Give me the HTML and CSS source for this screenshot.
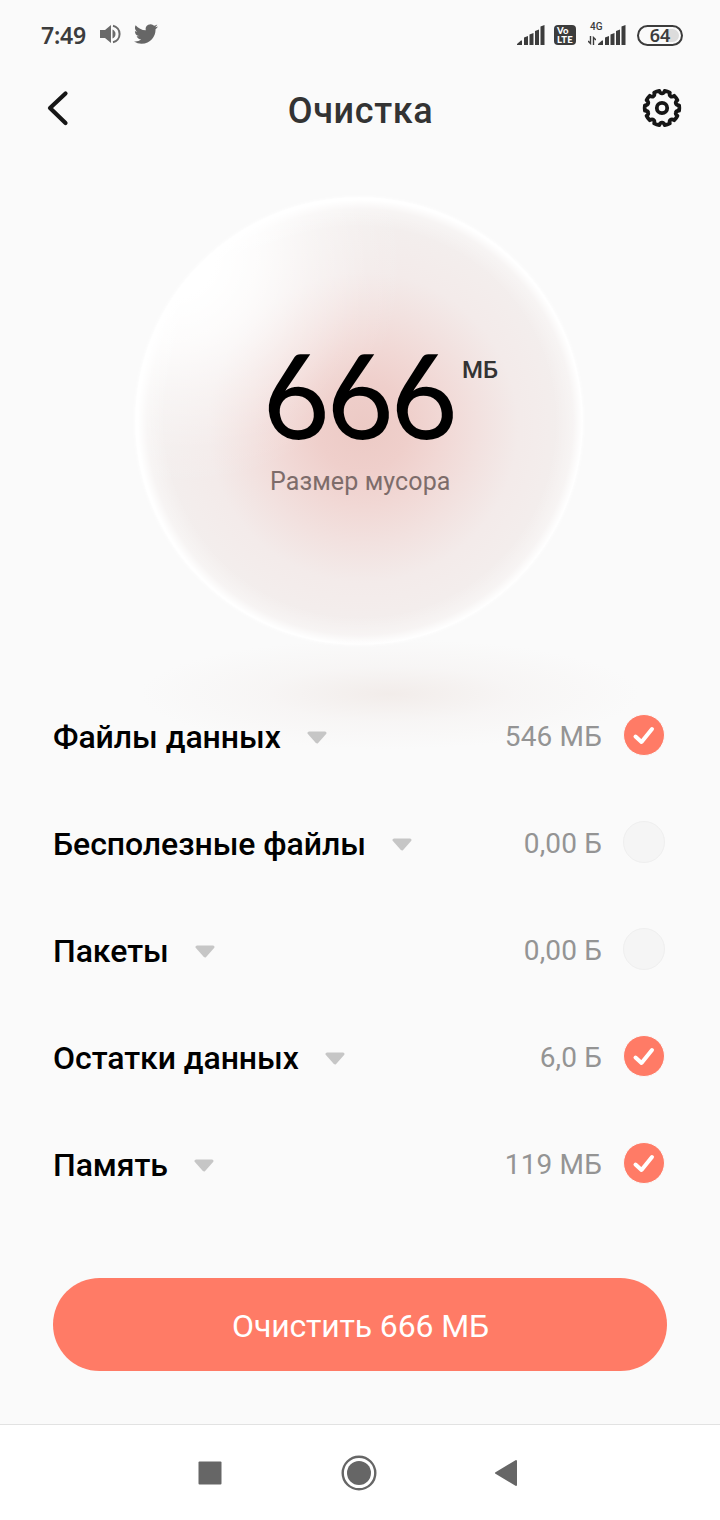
FILE: index.html
```html
<!DOCTYPE html>
<html lang="ru">
<head>
    <meta charset="utf-8">
    <title>Очистка</title>
    <meta name="viewport" content="width=device-width, initial-scale=1">
    <link rel="stylesheet" href="styles.css">
</head>
<body>
    <div class="phone">
        <div class="status">
            <div class="status-left">
                <span class="time">7:49</span>
                <svg class="sound" width="21" height="20" viewBox="0 0 21 20">
                    <path d="M0 6h5l6-5v18l-6-5H0z" fill="#6a6a6a"/>
                    <path d="M12.5 5.5q3 1.5 3 4.5t-3 4.5z" fill="#6a6a6a"/>
                    <path d="M13 1.8a8.4 8.4 0 0 1 0 16.4" fill="none" stroke="#6a6a6a" stroke-width="2"/>
                </svg>
                <svg class="bird" width="24" height="24" viewBox="0 0 24 24">
                    <path fill="#666" d="M23.95 4.57a10 10 0 0 1-2.82.77 4.96 4.96 0 0 0 2.16-2.72c-.95.56-2 .96-3.13 1.18a4.92 4.92 0 0 0-8.38 4.48C7.69 8.1 4.07 6.13 1.64 3.16a4.82 4.82 0 0 0-.67 2.48c0 1.7.87 3.2 2.19 4.09a4.9 4.9 0 0 1-2.23-.62v.06a4.92 4.92 0 0 0 3.95 4.83 5 5 0 0 1-2.21.08 4.94 4.94 0 0 0 4.6 3.42A9.87 9.87 0 0 1 0 19.54a13.99 13.99 0 0 0 7.55 2.21c9.05 0 14-7.5 14-13.98 0-.21 0-.42-.02-.63a9.94 9.94 0 0 0 2.46-2.55z"/>
                </svg>
            </div>
            <div class="status-right">
                <svg class="signal" width="28" height="20" viewBox="0 0 28 20">
                    <path fill="#3c3c3c" d="M0 20v-1l4-3.500h1V20zM7 12.500l4-1.500v9H7zM12.500 9.500l4-1.500v12h-4zM18 6l4-1.500V20h-4zM23.500 1.500l4-1.500v20h-4z"/>
                </svg>
                <span class="volte"><b>Vo</b><b>LTE</b></span>
                <span class="mobile">
                    <span class="net">4G</span>
                    <svg class="arrows" width="8" height="9" viewBox="0 0 8 9">
                        <path fill="none" stroke="#3c3c3c" stroke-width="1.400" d="M2.500 0v7.500L0 5M5.500 9V1.500L8 4"/>
                    </svg>
                    <svg width="28" height="20" viewBox="0 0 28 20">
                        <path fill="#3c3c3c" d="M0 20v-1l4-3.500h1V20zM7 12.500l4-1.500v9H7zM12.500 9.500l4-1.500v12h-4zM18 6l4-1.500V20h-4zM23.500 1.500l4-1.500v20h-4z"/>
                    </svg>
                </span>
                <span class="battery">64</span>
            </div>
        </div>

        <div class="header">
            <svg width="24" height="36" viewBox="0 0 24 36">
                <path d="M19.500 3.500L4 18l15.500 15" fill="none" stroke="#161616" stroke-width="4.200" stroke-linecap="round" stroke-linejoin="round"/>
            </svg>
            <h1>Очистка</h1>
            <svg id="gear" width="40" height="40" viewBox="-20 -20 40 40">
                <path id="gear-rim" fill="none" stroke="#161616" stroke-width="3.800" stroke-linejoin="round"/>
                <circle r="5.200" fill="none" stroke="#161616" stroke-width="3.800"/>
            </svg>
        </div>

        <div class="hero">
            <div class="ball">
                <div class="total"><span class="number"><i>6</i><i>6</i><i>6</i></span><span class="unit">МБ</span></div>
                <div class="caption">Размер мусора</div>
            </div>
            <div class="shadow"></div>
        </div>

        <ul class="list">
            <li>
                <span class="name">Файлы данных</span><svg class="arrow" width="20" height="14" viewBox="0 0 20 14"><path d="M2 2h16l-8 9z"/></svg>
                <span class="size">546 МБ</span>
                <span class="check on"><svg width="40" height="40" viewBox="0 0 40 40"><path d="M11.500 21.500l6 5.500L28 14"/></svg></span>
            </li>
            <li>
                <span class="name">Бесполезные файлы</span><svg class="arrow" width="20" height="14" viewBox="0 0 20 14"><path d="M2 2h16l-8 9z"/></svg>
                <span class="size">0,00 Б</span>
                <span class="check"></span>
            </li>
            <li>
                <span class="name">Пакеты</span><svg class="arrow" width="20" height="14" viewBox="0 0 20 14"><path d="M2 2h16l-8 9z"/></svg>
                <span class="size">0,00 Б</span>
                <span class="check"></span>
            </li>
            <li>
                <span class="name">Остатки данных</span><svg class="arrow" width="20" height="14" viewBox="0 0 20 14"><path d="M2 2h16l-8 9z"/></svg>
                <span class="size">6,0 Б</span>
                <span class="check on"><svg width="40" height="40" viewBox="0 0 40 40"><path d="M11.500 21.500l6 5.500L28 14"/></svg></span>
            </li>
            <li>
                <span class="name">Память</span><svg class="arrow" width="20" height="14" viewBox="0 0 20 14"><path d="M2 2h16l-8 9z"/></svg>
                <span class="size">119 МБ</span>
                <span class="check on"><svg width="40" height="40" viewBox="0 0 40 40"><path d="M11.500 21.500l6 5.500L28 14"/></svg></span>
            </li>
        </ul>

        <button class="clean">Очистить 666 МБ</button>

        <div class="navbar">
            <svg width="24" height="24" viewBox="0 0 24 24"><rect x=".5" y=".5" width="23" height="23" rx="1" fill="#666"/></svg>
            <svg class="home" width="36" height="36" viewBox="0 0 36 36">
                <circle cx="18" cy="18" r="16.300" fill="none" stroke="#666" stroke-width="2.400"/>
                <circle cx="18" cy="18" r="12" fill="#666"/>
            </svg>
            <svg width="24" height="28" viewBox="0 0 24 28"><path d="M2 14L22 2v24z" fill="#666" stroke="#666" stroke-width="2" stroke-linejoin="round"/></svg>
        </div>
    </div>
    <script>
        // обод шестерёнки: 10 зубцов с впадинами
        var d = "";
        function point(r, deg) {
            var a = deg * Math.PI / 180;
            return (r * Math.sin(a)).toFixed(2) + " " + (-r * Math.cos(a)).toFixed(2);
        }
        for (var i = 0; i < 10; i++) {
            var a = i * 36;
            d += (i ? "L" : "M") + point(17.3, a - 27);
            d += "A17.3 17.3 0 0 1 " + point(17.3, a - 9);
            d += "Q" + point(14.6, a - 7) + " " + point(14.6, a);
            d += "Q" + point(14.6, a + 7) + " " + point(17.3, a + 9);
        }
        document.getElementById("gear-rim").setAttribute("d", d + "z");
    </script>
</body>
</html>
```

FILE: styles.css
```css
*{
    margin: 0;
    padding: 0;
    box-sizing: border-box;
}
body{
    background: #fafafa;
    font-family: Roboto, "Noto Sans", sans-serif;
}
svg{
    display: block;
    flex: none;
}
.phone{
    width: 720px;
    height: 1520px;
    display: flex;
    flex-direction: column;
    overflow: hidden;
}
/* статус-бар */
.status{
    height: 70px;
    padding: 0 37px 0 41px;
    display: flex;
    justify-content: space-between;
    align-items: center;
    color: #3c3c3c;
}
.status-left, .status-right{
    display: flex;
    align-items: center;
}
.time{
    font: 600 23px "Noto Sans", sans-serif;
    line-height: 30px;
    letter-spacing: -0.2px;
}
.sound{
    margin: -2px 0 0 14px;
}
.bird{
    margin: -2px 0 0 13px;
}
.volte{
    width: 22px;
    height: 20px;
    margin-left: 9px;
    border-radius: 4px;
    background: #3c3c3c;
    color: #fff;
    font: 900 9.5px Lato, sans-serif;
    line-height: 9px;
    padding: 1px 0 0 3px;
}
.volte b{
    display: block;
    font-weight: 900;
    letter-spacing: 0.2px;
}
.mobile{
    display: flex;
    align-items: flex-end;
    margin-left: 12px;
    position: relative;
}
.net{
    position: absolute;
    left: 2px;
    top: -4px;
    font: 500 10px Roboto, sans-serif;
    line-height: 12px;
}
.arrows{
    margin-right: 2px;
}
.battery{
    width: 46px;
    height: 21px;
    margin-left: 11px;
    border: 2px solid #3c3c3c;
    border-radius: 11px;
    box-shadow: inset 0 0 0 2px #fafafa;
    background: linear-gradient(to right, #fafafa 27px, #dcdcdc 27px, #dcdcdc 100%);
    font: 600 18px "Noto Sans", sans-serif;
    line-height: 16px;
    text-align: center;
}
.header{
    height: 76px;
    padding: 0 38px 0 46px;
    display: flex;
    justify-content: space-between;
    align-items: center;
}
.header h1{
    font-size: 36px;
    font-weight: 500;
    line-height: 42px;
    letter-spacing: 0.6px;
    color: #333;
    padding: 6px 0 0 9px;
}
/* шар с размером мусора */
.hero{
    height: 537px;
    padding: 51px 0 0 135px;
    position: relative;
}
.ball{
    width: 448px;
    height: 448px;
    border-radius: 50%;
    padding-top: 133px;
    background:
        radial-gradient(circle at 225px 225px, transparent 195px, rgba(255,255,255,.35) 213px, #fff 222px),
        radial-gradient(circle at 40px 60px, #fff 40px, rgba(255,255,255,.8) 85px, rgba(255,255,255,.4) 140px, rgba(255,255,255,.12) 190px, transparent 230px),
        radial-gradient(circle at 228px 230px, #eccac5 0, #efcfcb 45px, #f1d8d5 80px, #f2e1df 115px, rgba(243,232,231,.6) 155px, transparent 215px),
        #f3efee;
    box-shadow: 0 0 4px #fff;
}
.total{
    height: 137px;
    display: flex;
    padding-left: 126px;
}
.number{
    width: 201px;
    font: 500 118px Lato, sans-serif;
    line-height: 128px;
    color: #000;
    display: flex;
}
/* прямой наклонный хвост у шестёрки */
.number i{
    width: 64px;
    font-style: normal;
    transform: skewX(5deg) scaleX(.97);
}
.unit{
    font-size: 24px;
    font-weight: 500;
    line-height: 30px;
    padding-top: 25px;
    color: #333;
}
.caption{
    padding-left: 135px;
    font-size: 25px;
    line-height: 30px;
    letter-spacing: 0.1px;
    color: #7d6c6a;
}
.shadow{
    position: absolute;
    left: 140px;
    top: 493px;
    width: 500px;
    height: 110px;
    background: radial-gradient(closest-side, rgba(240,233,230,.8), rgba(244,240,239,.45) 50%, rgba(250,250,250,0));
}
.list{
    list-style: none;
    padding: 0 55px 0 53px;
    position: relative;
}
.list li{
    height: 107px;
    display: flex;
    align-items: center;
}
.name{
    font-size: 32px;
    font-weight: 500;
    letter-spacing: -0.06px;
    color: #000;
}
.arrow{
    margin: 2px 0 0 26px;
}
.arrow path{
    fill: #c6c6c6;
    stroke: #c6c6c6;
    stroke-width: 3;
    stroke-linejoin: round;
}
.size{
    margin-left: auto;
    font-size: 28px;
    letter-spacing: 0.15px;
    color: #949494;
}
.check{
    width: 42px;
    height: 42px;
    margin: -4px 0 0 21px;
    border: 1px solid #efefef;
    border-radius: 50%;
    background: #f5f5f5;
}
.check.on{
    border-color: #fafafa;
    background: #ff7b66;
}
.check path{
    fill: none;
    stroke: #fff;
    stroke-width: 4;
    stroke-linecap: round;
    stroke-linejoin: round;
}
.clean{
    width: 614px;
    height: 93px;
    margin: 60px 0 0 53px;
    border: 0;
    border-radius: 47px;
    background: #ff7b66;
    color: #fff;
    font: 400 32px Roboto, sans-serif;
    letter-spacing: -0.15px;
    padding: 2px 0 0 1px;
}
.navbar{
    height: 96px;
    margin-top: auto;
    border-top: 1px solid #e2e2e2;
    background: #fff;
    padding: 0 202px 0 198px;
    display: flex;
    justify-content: space-between;
    align-items: center;
}
.home{
    margin-left: 2px;
}
```
